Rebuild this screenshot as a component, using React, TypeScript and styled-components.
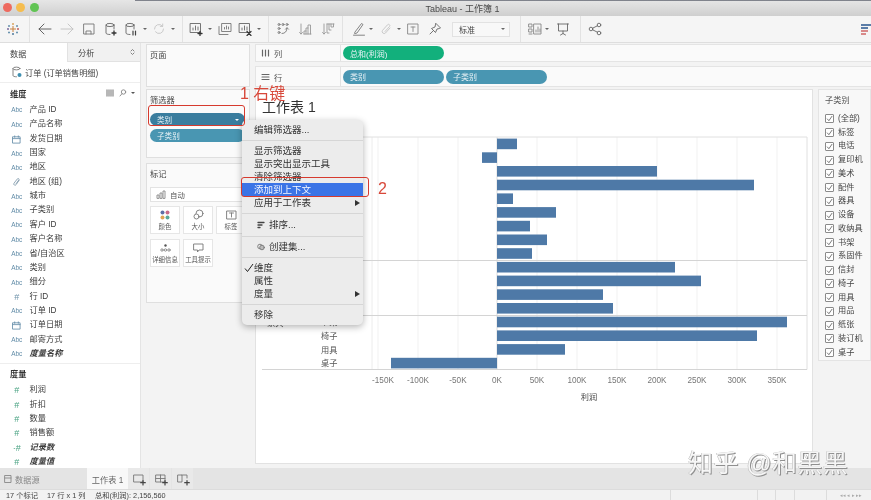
import React from "react";
import styled, { createGlobalStyle } from "styled-components";

const FONT = `"Liberation Sans", "Noto Sans CJK SC", sans-serif`;

const Global = createGlobalStyle`
  html, body { margin: 0; padding: 0; width: 871px; height: 500px; overflow: hidden; background: #f3f3f3; }
  * { box-sizing: border-box; }
`;

const Page = styled.div`
  position: relative; width: 871px; height: 500px; display: flex; flex-direction: column;
  font-family: ${FONT}; color: #333; overflow: hidden; background: #f3f3f3; filter: blur(0.45px);
`;

/* ---------- title bar ---------- */
const TitleBar = styled.div`
  position: relative; flex: 0 0 16px; display: flex; align-items: center; justify-content: center;
  background: linear-gradient(#e6e6e6, #cfcfcf); font-size: 9px; color: #4a4a4a; padding-left: 54px;
`;
const Lights = styled.div`
  position: absolute; left: 2.5px; top: 3px; display: flex; gap: 4.5px;
`;
const Light = styled.span<{ $c: string }>`
  width: 9px; height: 9px; border-radius: 50%; background: ${p => p.$c};
`;
const TopEdge = styled.div`
  position: absolute; left: 135px; right: 0; top: 0; height: 1px; background: #555a66; opacity: .7;
`;

/* ---------- toolbar ---------- */
const Toolbar = styled.div`
  flex: 0 0 27px; display: flex; align-items: center; padding-left: 6px;
  background: #f5f5f5; border-bottom: 1px solid #dedede;
`;
const Tool = styled.span<{ $m: number; $w: number }>`
  flex: 0 0 ${p => p.$w}px; width: ${p => p.$w}px; margin-left: ${p => p.$m}px;
  display: flex; align-items: center; justify-content: center;
  svg { display: block; }
`;
const Divider = styled.span<{ $m: number }>`
  flex: 0 0 1px; height: 26px; margin-left: ${p => p.$m}px; background: #e2e2e2;
`;
const Caret = styled.span<{ $c?: string }>`
  display: block; width: 0; height: 0; border-left: 2px solid transparent; border-right: 2px solid transparent;
  border-top: 2.5px solid ${p => p.$c || "#666"};
`;
const FitSelect = styled.div<{ $m: number }>`
  flex: 0 0 58px; height: 15px; margin-left: ${p => p.$m}px; display: flex; align-items: center; justify-content: space-between;
  padding: 0 4px 0 6px; background: #f8f8f8; border: 1px solid #e2e2e2; font-size: 8px; color: #444;
`;
const EdgeIcon = styled.span`
  margin-left: auto; width: 10px; height: 11px; display: flex; flex-direction: column; gap: 1px;
`;
const EdgeBar = styled.i<{ $c: string; $w: number }>`
  display: block; height: 2px; width: ${p => p.$w}px; background: ${p => p.$c};
`;

/* ---------- main ---------- */
const Main = styled.div`
  flex: 1; min-height: 0; display: flex;
`;
const DataPane = styled.div`
  flex: 0 0 141px; background: #fff; border-right: 1px solid #e4e4e4; display: flex; flex-direction: column;
`;
const PaneTabs = styled.div`
  flex: 0 0 19px; display: flex;
`;
const PaneTab = styled.div<{ $active?: boolean }>`
  flex: 0 0 ${p => (p.$active ? 67 : 73)}px; display: flex; align-items: center; justify-content: space-between; padding: 0 5px 0 10px;
  font-size: 8.2px; color: #444; background: ${p => (p.$active ? "#fff" : "#f1f1f1")};
  border-bottom: ${p => (p.$active ? "none" : "1px solid #e2e2e2")};
  border-left: ${p => (p.$active ? "none" : "1px solid #e2e2e2")};
`;
const Source = styled.div`
  flex: 0 0 21px; display: flex; align-items: center; gap: 3px; padding-left: 12px; font-size: 8.2px; color: #444; border-bottom: 1px solid #eee;
`;
const SectionHead = styled.div<{ $pt: number; $mb: number }>`
  flex: 0 0 18px; margin-bottom: ${p => p.$mb}px; display: flex; align-items: center; padding: ${p => p.$pt}px 5px 0 10px; font-size: 8.2px; color: #333; font-weight: 700;
`;
const HeadTools = styled.div`
  margin-left: auto; display: flex; align-items: center; gap: 4px;
`;
const Field = styled.div`
  flex: 0 0 14.35px; height: 14.35px; display: flex; align-items: center; font-size: 8.2px; line-height: 1; color: #3c3c3c;
`;
const FieldGlyph = styled.span<{ $c: string }>`
  flex: 0 0 29.6px; padding: 1px 6px 0 10px; display: flex; align-items: center; justify-content: center; color: ${p => p.$c};
  font-size: 6.4px; line-height: 1; white-space: nowrap;
`;
const Hash = styled.span<{ $c: string }>`
  font-size: 9px; color: ${p => p.$c}; font-weight: 400;
`;
const FieldName = styled.span<{ $calc?: boolean }>`
  font-style: ${p => (p.$calc ? "italic" : "normal")}; font-weight: ${p => (p.$calc ? 700 : 400)};
`;
const PaneRule = styled.div`
  flex: 0 0 1px; margin-top: 1.5px; background: #eee;
`;

const SideCol = styled.div`
  flex: 0 0 104px; min-width: 0; margin-left: 5px; padding-top: 1px; display: flex; flex-direction: column;
`;
const Card = styled.div<{ $h: number; $after: number }>`
  flex: 0 0 ${p => p.$h}px; margin-bottom: ${p => p.$after}px; background: #fafafa; border: 1px solid #dfdfdf; padding: 5px 4px 0 3px; min-width: 0;
`;
const CardTitle = styled.div`
  font-size: 8.2px; line-height: 11px; color: #444; margin-bottom: 2px;
`;
const Pill = styled.div<{ $bg: string; $w?: number }>`
  height: 13px; border-radius: 7px; background: ${p => p.$bg}; color: #e8f2f6; font-size: 7.6px; display: flex; align-items: center;
  justify-content: space-between; padding: 0 6px 0 7px; ${p => (p.$w ? `width:${p.$w}px;` : "")}
`;
const PillStack = styled.div`
  display: flex; flex-direction: column; gap: 3px; margin-top: 7px;
`;
const MarkSelect = styled.div`
  height: 15px; margin-top: 7px; display: flex; align-items: center; gap: 4px; padding: 0 5px; background: #fff;
  border: 1px solid #e3e3e3; font-size: 7.4px; color: #555;
`;
const MarkGrid = styled.div`
  margin-top: 4px; display: grid; grid-template-columns: repeat(3, 30px); gap: 5px 3px;
`;
const MarkBtn = styled.div`
  height: 28px; border: 1px solid #e6e6e6; background: #fff; display: flex; flex-direction: column; align-items: center; justify-content: flex-end;
  padding-bottom: 2px; gap: 2px; font-size: 6.4px; color: #555; white-space: nowrap;
`;

const WorkCol = styled.div`
  flex: 1; min-width: 0; margin-left: 5px; padding-top: 1px; display: flex; flex-direction: column;
`;
const Shelf = styled.div<{ $h: number; $after: number }>`
  flex: 0 0 ${p => p.$h}px; margin-bottom: ${p => p.$after}px; display: flex; background: #fafafa;
  border-top: 1px solid #e4e4e4; border-bottom: 1px solid #e4e4e4;
`;
const ShelfLabel = styled.div`
  flex: 0 0 86px; display: flex; align-items: center; gap: 4px; padding-left: 5px; font-size: 8.2px; color: #555; border-right: 1px solid #e2e2e2;
  border-left: 1px solid #e4e4e4;
`;
const ShelfPills = styled.div`
  flex: 1; display: flex; align-items: center; gap: 2px; padding-left: 2px;
`;
const ShelfPill = styled(Pill)`
  font-size: 8px; height: 14px; flex: 0 0 auto;
`;
const CanvasRow = styled.div`
  flex: 1; min-height: 0; display: flex; align-items: flex-start; gap: 5px;
`;
const Sheet = styled.div`
  flex: 0 0 557px; height: 375px; background: #fff; border: 1px solid #e2e2e2; display: flex; flex-direction: column;
`;
const SheetTitle = styled.div`
  flex: 0 0 40px; padding: 9px 0 0 6px; font-size: 14px; line-height: 16px; color: #333;
`;
const ChartSvg = styled.svg`
  display: block; flex: 0 0 auto; margin-left: -1px;
  text { font-family: ${FONT}; }
`;
const Legend = styled.div`
  flex: 1; height: 272px; background: #f8f8f8; border: 1px solid #e4e4e4; padding: 5px 0 0 6px; display: flex; flex-direction: column;
`;
const LegendTitle = styled.div`
  font-size: 8.2px; line-height: 11px; color: #555; margin-bottom: 6px;
`;
const Check = styled.div`
  flex: 0 0 13.76px; display: flex; align-items: center; gap: 4px; font-size: 8.2px; line-height: 1; color: #444; white-space: nowrap;
`;
const CheckBox = styled.span`
  flex: 0 0 9px; height: 9px; background: #fff; border: 1px solid #8a8a8a; border-radius: 1px; display: flex; align-items: center; justify-content: center;
`;

/* ---------- bottom ---------- */
const TabBar = styled.div`
  flex: 0 0 22px; display: flex; background: #e4e4e4; border-bottom: 1px solid #dcdcdc;
`;
const SourceTab = styled.div`
  flex: 0 0 87px; display: flex; align-items: center; gap: 3px; padding-left: 4px; font-size: 8.2px; color: #888;
`;
const SheetTab = styled.div`
  flex: 0 0 41px; display: flex; align-items: center; justify-content: center; background: #f8f8f8; font-size: 8.2px; color: #666; white-space: nowrap;
`;
const AddTab = styled.div`
  flex: 0 0 21px; margin-right: 1px; display: flex; align-items: center; justify-content: center; background: #e9e9e9;
`;
const StatusBar = styled.div`
  flex: 0 0 10px; display: flex; align-items: center; background: #f2f2f2; font-size: 7.3px; color: #444; white-space: nowrap; padding-left: 6px;
`;
const StatusText = styled.span<{ $w: number }>`
  flex: 0 0 ${p => p.$w}px;
`;
const StatusCell = styled.span<{ $w: number }>`
  flex: 0 0 ${p => p.$w}px; height: 10px; border-left: 1px solid #dcdcdc;
`;
const Pager = styled.span`
  flex: 1; height: 10px; border-left: 1px solid #dcdcdc; display: flex; align-items: center; justify-content: space-around; padding: 0 2px 0 6px;
  color: #aaa; font-size: 5px;
`;

/* ---------- overlays ---------- */
const Menu = styled.div`
  position: absolute; left: 242px; top: 120px; width: 121px; height: 205px; padding-top: 3px; background: #ececec; border-radius: 5px;
  box-shadow: 0 2px 7px rgba(0,0,0,.3); font-size: 9.5px; color: #333; z-index: 3;
`;
const MenuItem = styled.div<{ $on?: boolean; $h?: number }>`
  position: relative; height: ${p => p.$h || 13}px; display: flex; align-items: center; padding-left: 12px;
  background: ${p => (p.$on ? "#3b74e6" : "transparent")}; color: ${p => (p.$on ? "#f4f7ff" : "#333")}; white-space: nowrap; line-height: 1;
`;
const MenuIcon = styled.span`
  margin: 0 4px 0 3px; display: flex;
`;
const MenuSep = styled.div`
  height: 1px; margin: 3.5px 0; background: #d6d6d6;
`;
const SubArrow = styled.span`
  position: absolute; right: 3px; top: 50%; transform: translateY(-50%); width: 0; height: 0;
  border-top: 3px solid transparent; border-bottom: 3px solid transparent; border-left: 5px solid #333;
`;
const Tick = styled.svg`
  position: absolute; left: 2px; top: 2px;
`;
const RedBox = styled.div<{ $x: number; $y: number; $w: number; $h: number; $r: number }>`
  position: absolute; left: ${p => p.$x}px; top: ${p => p.$y}px; width: ${p => p.$w}px; height: ${p => p.$h}px;
  border: 1.5px solid #d63a2e; border-radius: ${p => p.$r}px; z-index: 4;
`;
const Note = styled.div<{ $x: number; $y: number; $s: number }>`
  position: absolute; left: ${p => p.$x}px; top: ${p => p.$y}px; font-size: ${p => p.$s}px; line-height: 1; color: #d8483a; z-index: 4; white-space: nowrap;
`;
const Watermark = styled.div`
  position: absolute; left: 688px; top: 451px; font-size: 25px; line-height: 1; letter-spacing: .4px; color: #f6f6f6; z-index: 5; white-space: nowrap;
  text-shadow: 1px 1px 0 #8f8f8f, -0.5px 0 0 #b5b5b5;
`;

/* ---------- icons ---------- */
const S = ({ w = 14, h = 14, vb = "0 0 14 14", c = "#6a6a6a", children }: { w?: number; h?: number; vb?: string; c?: string; children: React.ReactNode }) => (
  <svg width={w} height={h} viewBox={vb} fill="none" stroke={c} strokeWidth={0.9} strokeLinecap="round" strokeLinejoin="round">{children}</svg>
);

const Logo = () => (
  <svg width="14" height="14" viewBox="0 0 14 14" strokeWidth="1">
    <path d="M7 4v6M4 7h6" stroke="#c8813f" />
    <path d="M7 1v2M6 2h2" stroke="#d9a55f" />
    <path d="M7 11v2M6 12h2" stroke="#4f7a9e" />
    <path d="M1 7h2M2 6v2" stroke="#7a6a9e" />
    <path d="M11 7h2M12 6v2" stroke="#c25c5c" />
    <path d="M3 3v2M2.2 4h1.6M11 3v2M10.2 4h1.6M3 9.5v2M2.2 10.5h1.6M11 9.5v2M10.2 10.5h1.6" stroke="#5d8aa8" />
  </svg>
);
const toolIcons: Record<string, React.ReactNode> = {
  logo: <Logo />,
  back: <S w={16} vb="0 0 16 14" c="#555"><path d="M14 7H2M7 2 2 7l5 5" /></S>,
  fwd: <S w={16} vb="0 0 16 14" c="#c2c2c2"><path d="M2 7h12M9 2l5 5-5 5" /></S>,
  save: <S c="#777"><path d="M2 2h10v10H2zM4 12V9h5v3" /></S>,
  ds: <S c="#666"><ellipse cx="6" cy="3" rx="4" ry="1.6" /><path d="M2 3v8c0 1 2 1.5 4 1.5M10 3v4" /><path d="M10 9v4M8 11h4" strokeWidth="1.3" stroke="#333" /></S>,
  pause: <S c="#666"><ellipse cx="6" cy="3" rx="4" ry="1.6" /><path d="M2 3v8c0 1 2 1.5 4 1.5M10 3v4" /><path d="M9 9v4M11.5 9v4" strokeWidth="1.2" stroke="#444" /></S>,
  refresh: <S c="#c4c4c4"><path d="M2.5 7a4.5 4.5 0 0 1 8-2.8M11.5 7a4.5 4.5 0 0 1-8 2.8" /><path d="M10.7 2v2.4H8.3" /></S>,
  sheet: <S c="#666"><path d="M1.5 1.5h10v9h-10zM4 8V6M6.5 8V4M9 8V5" /><path d="M11 9.5v4M9 11.5h4" stroke="#333" strokeWidth="1.3" /></S>,
  dup: <S c="#777"><path d="M4 1.5h9v8H4zM1 4.5v8h9M6.5 7V5.5M8.5 7V4M10.5 7V5" /></S>,
  clear: <S c="#666"><path d="M1.5 1.5h10v9h-10zM4 8V6M6.5 8V4M9 8V5" /><path d="m9 9.5 4 4M13 9.5l-4 4" stroke="#333" strokeWidth="1.2" /></S>,
  swap: <S c="#777"><circle cx="3" cy="2.5" r="1" /><circle cx="7" cy="2.5" r="1" /><circle cx="11" cy="2.5" r="1" /><circle cx="3" cy="6.5" r="1" /><circle cx="3" cy="10.5" r="1" /><path d="M6 11.5c3 0 5-2 5-5.5M9.5 7.2 11 5.7l1.5 1.5" /></S>,
  sortA: <S c="#999"><path d="M3 2v10M1.5 10.5 3 12l1.5-1.5M6 12h7M6 12V9h2M8 12V6h2M10 12V3h2.5v9" /></S>,
  sortD: <S c="#999"><path d="M3 2v10M1.5 10.5 3 12l1.5-1.5M6 2h7M6 2v9h2M8 2v6h2M10 2v3h2.5V2" /></S>,
  pen: <S c="#777"><path d="M3 10 9.5 1.5 11 2.5 5 11l-2 .5zM1.5 13.2h11" /></S>,
  clip: <S c="#c4c4c4"><path d="m11 6-4.5 5a2 2 0 0 1-3-2.6l5-5.6a1.3 1.3 0 0 1 2 1.7L6 9.5" /></S>,
  text: <S c="#888"><path d="M2 2h10v10H2zM5 5h4M7 5v4.5" /></S>,
  pin: <S c="#666"><path d="M8 1.5 12.5 6l-1 .5L9 7l-1.5 3.5-4-4L7 5l.5-2.5zM5.5 8.5 2 12" /></S>,
  show: <S c="#888"><path d="M1 2h3v3H1zM1 7h3v3H1zM1 12h3M6 2h7v10H6zM8 10V8M10 10V5M12 10V7" /></S>,
  present: <S c="#666"><path d="M1.5 2h11M2.5 2v7h9V2M7 9v2.5M4.5 13 7 11.5 9.5 13" /></S>,
  share: <S c="#666"><circle cx="3" cy="7" r="1.8" /><circle cx="11" cy="3" r="1.8" /><circle cx="11" cy="11" r="1.8" /><path d="m4.6 6.2 4.8-2.4M4.6 7.8l4.8 2.4" /></S>,
};
type TI = { k: string; m: number; w?: number };
const tools: (TI | { sep: number } | { dd: number } | { fit: number })[] = [
  { k: "logo", m: 0 }, { sep: 9 },
  { k: "back", m: 7, w: 16 }, { k: "fwd", m: 6, w: 16 }, { k: "save", m: 7 }, { k: "ds", m: 8 }, { k: "pause", m: 6 }, { dd: 4.5 }, { k: "refresh", m: 4.5 }, { dd: 4.5 }, { sep: 6.5 },
  { k: "sheet", m: 6 }, { dd: 4.5 }, { k: "dup", m: 5.5 }, { k: "clear", m: 6 }, { dd: 4.5 }, { sep: 6.5 },
  { k: "swap", m: 7 }, { k: "sortA", m: 8 }, { k: "sortD", m: 9 }, { sep: 7 },
  { k: "pen", m: 9 }, { dd: 2.5 }, { k: "clip", m: 5.5 }, { dd: 3.5 }, { k: "text", m: 4.5 }, { k: "pin", m: 8 }, { fit: 10 }, { sep: 10 },
  { k: "show", m: 7 }, { dd: 2.5 }, { k: "present", m: 6.5 }, { sep: 10 }, { k: "share", m: 7 },
];

const Cal = () => <S w={9} h={9} vb="0 0 10 10" c="#5f8aa6"><path d="M1 2h8v7H1zM1 4h8M3 1v1.5M7 1v1.5" /></S>;
const PaperClip = () => <S w={9} h={10} vb="0 0 10 10" c="#7d97aa"><path d="M8 3 4.5 8a1.4 1.4 0 0 1-2.3-1.6L6 1.5a1 1 0 0 1 1.6 1.2L4.6 6.8" /></S>;

type F = { n: string; t: "abc" | "cal" | "clip" | "num" | "green" | "calc"; i?: boolean };
const dims: F[] = [
  { n: "产品 ID", t: "abc" }, { n: "产品名称", t: "abc" }, { n: "发货日期", t: "cal" }, { n: "国家", t: "abc" }, { n: "地区", t: "abc" },
  { n: "地区 (组)", t: "clip" }, { n: "城市", t: "abc" }, { n: "子类别", t: "abc" }, { n: "客户 ID", t: "abc" }, { n: "客户名称", t: "abc" },
  { n: "省/自治区", t: "abc" }, { n: "类别", t: "abc" }, { n: "细分", t: "abc" }, { n: "行 ID", t: "num" }, { n: "订单 ID", t: "abc" },
  { n: "订单日期", t: "cal" }, { n: "邮寄方式", t: "abc" }, { n: "度量名称", t: "abc", i: true },
];
const meas: F[] = [
  { n: "利润", t: "green" }, { n: "折扣", t: "green" }, { n: "数量", t: "green" }, { n: "销售额", t: "green" }, { n: "记录数", t: "calc", i: true }, { n: "度量值", t: "green", i: true },
];
const Glyph = ({ t }: { t: F["t"] }) => {
  if (t === "abc") return <FieldGlyph $c="#5f8aa6">Abc</FieldGlyph>;
  if (t === "cal") return <FieldGlyph $c="#5f8aa6"><Cal /></FieldGlyph>;
  if (t === "clip") return <FieldGlyph $c="#5f8aa6"><PaperClip /></FieldGlyph>;
  if (t === "num") return <FieldGlyph $c="#5f8aa6"><Hash $c="#6f93aa">#</Hash></FieldGlyph>;
  return <FieldGlyph $c="#4aa383"><Hash $c="#4aa383">{t === "calc" ? "·#" : "#"}</Hash></FieldGlyph>;
};
const FieldRow = ({ f }: { f: F }) => (
  <Field><Glyph t={f.t} /><FieldName $calc={f.i}>{f.n}</FieldName></Field>
);

const legend = ["(全部)", "标签", "电话", "复印机", "美术", "配件", "器具", "设备", "收纳具", "书架", "系固件", "信封", "椅子", "用具", "用品", "纸张", "装订机", "桌子"];

const rows: [string, number][] = [
  ["标签", 517], ["美术", 482], ["器具", 657], ["收纳具", 754], ["系固件", 513], ["信封", 556], ["用品", 530], ["纸张", 547], ["装订机", 532],
  ["电话", 675], ["复印机", 701], ["配件", 603], ["设备", 613],
  ["书架", 787], ["椅子", 757], ["用具", 565], ["桌子", 391],
];
const ticks: [string, number, number][] = [
  ["-150K", 378, 383], ["-100K", 418, 418], ["-50K", 458, 458], ["0K", 497, 497], ["50K", 537, 537], ["100K", 577, 577],
  ["150K", 617, 617], ["200K", 657, 657], ["250K", 697, 697], ["300K", 737, 737], ["350K", 777, 777],
];
const Chart = () => (
  <ChartSvg width="557" height="280" viewBox="255 130 557 280">
    <path d="M372 137V369.5" stroke="#ececec" />
    {ticks.map(([l, x]) => <line key={l} x1={x} x2={x} y1={137} y2={369} stroke={x === 497 ? "#dcdcdc" : "#f1f1f1"} />)}
    <path d="M268 137H807V369.5" stroke="#e0e0e0" fill="none" />
    <path d="M268 260.5H807M268 315.5H807" stroke="#d4d4d4" />
    <path d="M262 369.5H807" stroke="#d4d4d4" />
    {rows.map(([n, x], i) => {
      const y = 138.6 + i * 13.7;
      return (
        <g key={n}>
          <rect x={Math.min(x, 497)} y={y} width={Math.abs(x - 497)} height={10.6} fill="#4e79a7" />
          {i >= 13 && <text x={321} y={y + 8.6} fontSize="8.2" fill="#555">{n}</text>}
        </g>
      );
    })}
    <text x={267} y={326} fontSize="8.2" fill="#555">家具</text>
    {ticks.map(([l, , c]) => <text key={l} x={c} y={383} fontSize="8.2" fill="#777" textAnchor="middle">{l}</text>)}
    <text x={589} y={400} fontSize="8.2" fill="#444" textAnchor="middle">利润</text>
  </ChartSvg>
);

const AddIcon = ({ kind }: { kind: 0 | 1 | 2 }) => (
  <S c="#777">
    {kind === 0 && <path d="M2 3h9v7H2z" />}
    {kind === 1 && <path d="M2 3h9v7H2zM6.5 3v7M2 6.5h9" />}
    {kind === 2 && <path d="M2 3h4v7H2zM6 3h5v3" />}
    <path d="M11 8.5v4.5M8.7 10.7h4.6" stroke="#444" strokeWidth="1.2" />
  </S>
);

const CheckMark = () => <S w={7} h={7} vb="0 0 8 8" c="#555"><path d="m1.5 4.5 1.8 2L6.8 1.5" /></S>;

export default function App() {
  return (
    <Page>
      <Global />
      <TitleBar>
        <TopEdge />
        <Lights><Light $c="#ee6a5f" /><Light $c="#f5bd4f" /><Light $c="#61c454" /></Lights>
        Tableau - 工作簿 1
      </TitleBar>
      <Toolbar>
        {tools.map((t, i) => {
          if ("sep" in t) return <Divider key={i} $m={t.sep} />;
          if ("dd" in t) return <Tool key={i} $m={t.dd} $w={5}><Caret /></Tool>;
          if ("fit" in t) return <FitSelect key={i} $m={t.fit}>标准<Caret /></FitSelect>;
          return <Tool key={i} $m={t.m} $w={t.w || 14}>{toolIcons[t.k]}</Tool>;
        })}
        <EdgeIcon><EdgeBar $c="#5b7da8" $w={10} /><EdgeBar $c="#5b7da8" $w={7} /><EdgeBar $c="#d98a8a" $w={7} /><EdgeBar $c="#d98a8a" $w={5} /></EdgeIcon>
      </Toolbar>
      <Main>
        <DataPane>
          <PaneTabs>
            <PaneTab $active>数据</PaneTab>
            <PaneTab>分析<S w={5} h={8} vb="0 0 5 8" c="#777"><path d="m1 3 1.5-1.5L4 3M1 5l1.5 1.5L4 5" /></S></PaneTab>
          </PaneTabs>
          <Source>
            <S w={10} h={12} vb="0 0 10 12" c="#777"><ellipse cx="4.5" cy="2.5" rx="3.5" ry="1.4" /><path d="M1 2.5v7c0 .8 1.5 1.3 3.5 1.3" /><circle cx="7.5" cy="9" r="2" fill="#3f8fb0" stroke="none" /></S>
            订单 (订单销售明细)
          </Source>
          <SectionHead $pt={1} $mb={2}>
            维度
            <HeadTools>
              <S w={9} h={8} vb="0 0 9 8" c="#999"><path d="M1 1v6M3 1v6M5 1v6M7 1v6" strokeWidth="1.4" /></S>
              <S w={8} h={8} vb="0 0 8 8" c="#888"><circle cx="4.5" cy="3" r="2.2" /><path d="M3 4.7 1 7" /></S>
              <Caret $c="#555" />
            </HeadTools>
          </SectionHead>
          {dims.map(f => <FieldRow key={f.n} f={f} />)}
          <PaneRule />
          <SectionHead $pt={0} $mb={1.5}>度量</SectionHead>
          {meas.map(f => <FieldRow key={f.n} f={f} />)}
        </DataPane>
        <SideCol>
          <Card $h={43} $after={2}><CardTitle>页面</CardTitle></Card>
          <Card $h={69} $after={5}>
            <CardTitle>筛选器</CardTitle>
            <PillStack>
              <Pill $bg="#3a7d9e">类别<Caret $c="#fff" /></Pill>
              <Pill $bg="#4996b2">子类别</Pill>
            </PillStack>
          </Card>
          <Card $h={140} $after={0}>
            <CardTitle>标记</CardTitle>
            <MarkSelect>
              <S w={10} h={9} vb="0 0 10 9" c="#888"><path d="M1 8V5h2v3zM4 8V3h2v5zM7 8V1h2v7z" /></S>
              自动
            </MarkSelect>
            <MarkGrid>
              <MarkBtn>
                <svg width="10" height="10" viewBox="0 0 10 10"><circle cx="2.5" cy="2.5" r="2" fill="#5d6ea6" /><circle cx="7.5" cy="2.5" r="2" fill="#c86a8a" /><circle cx="2.5" cy="7.5" r="2" fill="#e0a455" /><circle cx="7.5" cy="7.5" r="2" fill="#5aa89a" /></svg>
                颜色
              </MarkBtn>
              <MarkBtn>
                <S w={11} h={11} vb="0 0 11 11" c="#777"><circle cx="6.5" cy="4.5" r="3.5" /><circle cx="3.5" cy="7.5" r="2.5" fill="#fff" /></S>
                大小
              </MarkBtn>
              <MarkBtn>
                <S w={11} h={10} vb="0 0 11 10" c="#777"><path d="M1 1h9v8H1zM3.5 3h4M5.5 3v4" /></S>
                标签
              </MarkBtn>
              <MarkBtn>
                <S w={11} h={10} vb="0 0 11 10" c="#888"><circle cx="5.5" cy="2.5" r="1.2" fill="#555" stroke="none" /><circle cx="2" cy="7" r="1.2" /><circle cx="5.5" cy="7" r="1.2" /><circle cx="9" cy="7" r="1.2" /></S>
                详细信息
              </MarkBtn>
              <MarkBtn>
                <S w={11} h={10} vb="0 0 11 10" c="#777"><path d="M1 1h9v6H6L4.5 9V7H1z" /></S>
                工具提示
              </MarkBtn>
            </MarkGrid>
          </Card>
        </SideCol>
        <WorkCol>
          <Shelf $h={18} $after={4}>
            <ShelfLabel><S w={9} h={8} vb="0 0 9 8" c="#666"><path d="M1.5 1v6M4.5 1v6M7.5 1v6" strokeWidth="1.2" /></S>列</ShelfLabel>
            <ShelfPills><ShelfPill $bg="#12b07c" $w={101}>总和(利润)</ShelfPill></ShelfPills>
          </Shelf>
          <Shelf $h={21} $after={2}>
            <ShelfLabel><S w={9} h={8} vb="0 0 9 8" c="#666"><path d="M1 1.5h7M1 4h7M1 6.5h7" strokeWidth="1.1" /></S>行</ShelfLabel>
            <ShelfPills>
              <ShelfPill $bg="#4996b2" $w={101}>类别</ShelfPill>
              <ShelfPill $bg="#4996b2" $w={101}>子类别</ShelfPill>
            </ShelfPills>
          </Shelf>
          <CanvasRow>
            <Sheet>
              <SheetTitle>工作表 1</SheetTitle>
              <Chart />
            </Sheet>
            <Legend>
              <LegendTitle>子类别</LegendTitle>
              {legend.map(l => <Check key={l}><CheckBox><CheckMark /></CheckBox>{l}</Check>)}
            </Legend>
          </CanvasRow>
        </WorkCol>
      </Main>
      <TabBar>
        <SourceTab>
          <S w={8} h={10} vb="0 0 8 10" c="#888"><path d="M1 1.5h6v7H1zM1 4h6" /></S>
          数据源
        </SourceTab>
        <SheetTab>工作表 1</SheetTab>
        <AddTab><AddIcon kind={0} /></AddTab>
        <AddTab><AddIcon kind={1} /></AddTab>
        <AddTab><AddIcon kind={2} /></AddTab>
      </TabBar>
      <StatusBar>
        <StatusText $w={41}>17 个标记</StatusText>
        <StatusText $w={48}>17 行 x 1 列</StatusText>
        <StatusText $w={575}>总和(利润): 2,156,560</StatusText>
        <StatusCell $w={87} />
        <StatusCell $w={18} />
        <StatusCell $w={19} />
        <StatusCell $w={32} />
        <Pager>◂◂ ◂ ▸ ▸▸</Pager>
      </StatusBar>

      <Menu>
        <MenuItem>编辑筛选器...</MenuItem>
        <MenuSep />
        <MenuItem>显示筛选器</MenuItem>
        <MenuItem>显示突出显示工具</MenuItem>
        <MenuItem>清除筛选器</MenuItem>
        <MenuItem $on>添加到上下文</MenuItem>
        <MenuItem>应用于工作表<SubArrow /></MenuItem>
        <MenuSep />
        <MenuItem $h={15}>
          <MenuIcon><S w={8} h={8} vb="0 0 8 8" c="#444"><path d="M1 1.5h6M1 4h4M1 6.5h2" strokeWidth="1.3" /></S></MenuIcon>
          排序...
        </MenuItem>
        <MenuSep />
        <MenuItem>
          <MenuIcon><S w={8} h={8} vb="0 0 8 8" c="#777"><circle cx="3" cy="3.5" r="2.3" /><circle cx="5" cy="4.5" r="2.3" fill="#bbb" /></S></MenuIcon>
          创建集...
        </MenuItem>
        <MenuSep />
        <MenuItem>
          <Tick width="10" height="10" viewBox="0 0 10 10" fill="none" stroke="#222" strokeWidth="1"><path d="m1 5.5 2.5 3L9 1" /></Tick>
          维度
        </MenuItem>
        <MenuItem>属性</MenuItem>
        <MenuItem>度量<SubArrow /></MenuItem>
        <MenuSep />
        <MenuItem>移除</MenuItem>
      </Menu>
      <RedBox $x={148} $y={105} $w={97} $h={21} $r={3} />
      <RedBox $x={241} $y={177} $w={128} $h={20} $r={3} />
      <Note $x={240} $y={86} $s={16}>1 右键</Note>
      <Note $x={378} $y={181} $s={16}>2</Note>
      <Watermark>知乎 @和黑黑</Watermark>
    </Page>
  );
}
